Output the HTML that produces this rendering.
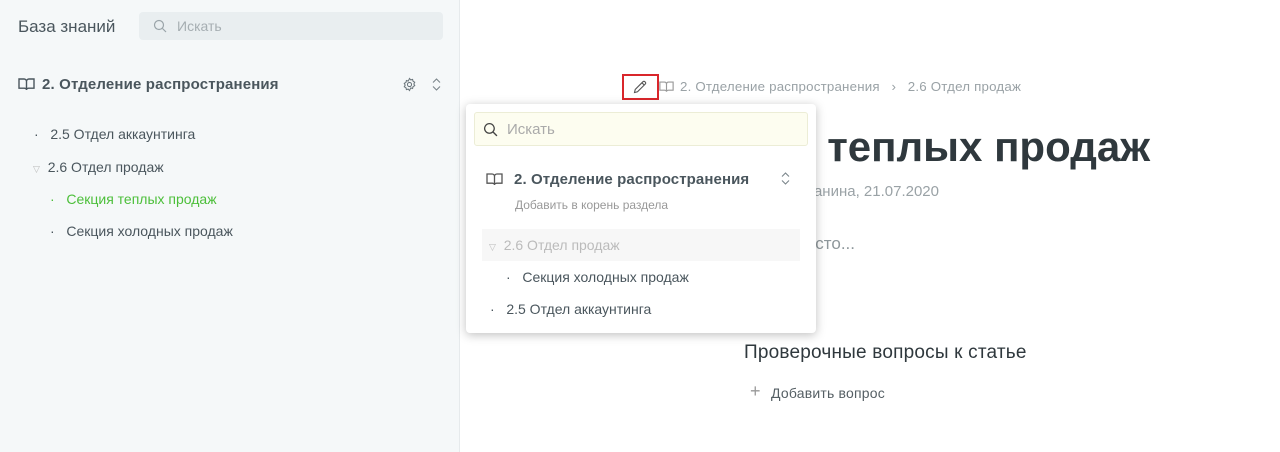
<!DOCTYPE html>
<html><head><meta charset="utf-8"><style>
*{margin:0;padding:0;box-sizing:border-box}
body{width:1280px;height:452px;overflow:hidden;background:#fff;font-family:"Liberation Sans","DejaVu Sans",sans-serif;position:relative;color:#3c4a52}
.a{position:absolute;white-space:nowrap}
#side{position:absolute;left:0;top:0;width:460px;height:452px;background:#f5f8f9;border-right:1px solid #e6eaec}
.r{text-align:right}
</style></head><body>
<div id="side">
 <div class="a" style="left:18px;top:17px;font-size:17px;color:#4a565d">База знаний</div>
 <div class="a" style="left:139px;top:12px;width:304px;height:28px;background:#e9eef0;border-radius:4px"></div>
 <svg class="a" style="left:153px;top:19px" width="14" height="14" viewBox="0 0 14 14"><circle cx="6" cy="6" r="4.5" fill="none" stroke="#9aa4a9" stroke-width="1.2"/><path d="M9.5 9.5L13 13" stroke="#9aa4a9" stroke-width="1.2"/></svg>
 <div class="a" style="left:177px;top:18px;font-size:14px;color:#a6aeb2">Искать</div>
 <svg class="a" style="left:18px;top:77px" width="17" height="14" viewBox="0 0 17 14"><path d="M1 2h5c1.5 0 2.5 1 2.5 2.5V13c0-1-1-1.8-2.3-1.8H1zM16 2h-5c-1.5 0-2.5 1-2.5 2.5V13c0-1 1-1.8 2.3-1.8H16z" fill="none" stroke="#4a565d" stroke-width="1.4"/></svg>
 <div class="a" style="left:42px;top:76px;font-size:15px;font-weight:bold;color:#4a565d;letter-spacing:.15px">2. Отделение распространения</div>
 <svg class="a" style="left:402px;top:77px" width="15" height="15" viewBox="0 0 16 16"><circle cx="8" cy="8" r="2.2" fill="none" stroke="#6b767c" stroke-width="1.1"/><path d="M8 1.5l1.3 1.6 2-.5.5 2 1.8 1-1 1.8 1 1.8-1.8 1-.5 2-2-.5L8 14.5l-1.3-1.6-2 .5-.5-2-1.8-1 1-1.8-1-1.8 1.8-1 .5-2 2 .5z" fill="none" stroke="#6b767c" stroke-width="1.1"/></svg>
 <svg class="a" style="left:431px;top:77px" width="11" height="15" viewBox="0 0 11 15"><path d="M2 5.5L5.5 2 9 5.5M2 9.5L5.5 13 9 9.5" fill="none" stroke="#7a858a" stroke-width="1.1"/></svg>
 <div class="a" style="left:34px;top:126px;font-size:14px;color:#4a565d">·&nbsp;&nbsp;&nbsp;2.5 Отдел аккаунтинга</div>
 <div class="a" style="left:33px;top:159px;font-size:14px;color:#4a565d"><span style="color:#bbb;font-size:9px">▽</span>&nbsp;&nbsp;2.6 Отдел продаж</div>
 <div class="a" style="left:50px;top:191px;font-size:14px;color:#4cbf3a">·&nbsp;&nbsp;&nbsp;Секция теплых продаж</div>
 <div class="a" style="left:50px;top:223px;font-size:14px;color:#4a565d">·&nbsp;&nbsp;&nbsp;Секция холодных продаж</div>
</div>

<div class="a" style="left:622px;top:74px;width:37px;height:26px;border:2px solid #d9262b"></div>
<svg class="a" style="left:632px;top:79px" width="16" height="16" viewBox="0 0 16 16"><path d="M2.5 13.5l.7-3L11 2.7a1.3 1.3 0 0 1 1.9 0l.4.4a1.3 1.3 0 0 1 0 1.9L5.5 12.8z M10 3.8l2.2 2.2" fill="none" stroke="#555" stroke-width="1.1"/></svg>
<svg class="a" style="left:659px;top:80px" width="15" height="13" viewBox="0 0 17 14"><path d="M1 2h5c1.5 0 2.5 1 2.5 2.5V13c0-1-1-1.8-2.3-1.8H1zM16 2h-5c-1.5 0-2.5 1-2.5 2.5V13c0-1 1-1.8 2.3-1.8H16z" fill="none" stroke="#999" stroke-width="1.3"/></svg>
<div class="a" style="left:680px;top:79px;font-size:13.3px;color:#9aa2a6;letter-spacing:.2px">2. Отделение распространения&nbsp;&nbsp;&nbsp;›&nbsp;&nbsp;&nbsp;2.6 Отдел продаж</div>

<div class="a r" style="right:130px;top:123px;font-size:42px;font-weight:bold;color:#2f383d">Секция теплых продаж</div>
<div class="a r" style="right:341px;top:183px;font-size:15px;color:#9aa2a6">Иван Потанина, 21.07.2020</div>
<div class="a r" style="right:425px;top:234px;font-size:17px;color:#8e979b">Пусто...</div>
<div class="a" style="left:744px;top:342px;font-size:19px;color:#2f383d;letter-spacing:.2px">Проверочные вопросы к статье</div>
<div class="a" style="left:750px;top:381px;font-size:18px;color:#999">+</div>
<div class="a" style="left:771px;top:385px;font-size:14px;color:#555f64;letter-spacing:.2px">Добавить вопрос</div>

<div class="a" style="left:466px;top:104px;width:350px;height:229px;background:#fff;border-radius:4px;box-shadow:0 2px 10px rgba(0,0,0,.25)">
 <div class="a" style="left:8px;top:8px;width:334px;height:34px;background:#fdfdf0;border:1px solid #ecedd6;border-radius:3px"></div>
 <svg class="a" style="left:17px;top:18px" width="15" height="15" viewBox="0 0 14 14"><circle cx="6" cy="6" r="4.5" fill="none" stroke="#444" stroke-width="1.2"/><path d="M9.5 9.5L13 13" stroke="#444" stroke-width="1.3"/></svg>
 <div class="a" style="left:41px;top:17px;font-size:15px;color:#aaa">Искать</div>
 <svg class="a" style="left:20px;top:68px" width="17" height="14" viewBox="0 0 17 14"><path d="M1 2h5c1.5 0 2.5 1 2.5 2.5V13c0-1-1-1.8-2.3-1.8H1zM16 2h-5c-1.5 0-2.5 1-2.5 2.5V13c0-1 1-1.8 2.3-1.8H16z" fill="none" stroke="#555" stroke-width="1.3"/></svg>
 <div class="a" style="left:48px;top:67px;font-size:15px;font-weight:bold;color:#4a565d;letter-spacing:.1px">2. Отделение распространения</div>
 <svg class="a" style="left:314px;top:67px" width="11" height="15" viewBox="0 0 11 15"><path d="M2 5.5L5.5 2 9 5.5M2 9.5L5.5 13 9 9.5" fill="none" stroke="#7a858a" stroke-width="1.1"/></svg>
 <div class="a" style="left:49px;top:94px;font-size:12px;color:#999">Добавить в корень раздела</div>
 <div class="a" style="left:16px;top:125px;width:318px;height:32px;background:#f7f7f7"></div>
 <div class="a" style="left:23px;top:133px;font-size:14px;color:#bbb"><span style="font-size:9px">▽</span>&nbsp;&nbsp;2.6 Отдел продаж</div>
 <div class="a" style="left:40px;top:165px;font-size:14px;color:#4a565d">·&nbsp;&nbsp;&nbsp;Секция холодных продаж</div>
 <div class="a" style="left:24px;top:197px;font-size:14px;color:#4a565d">·&nbsp;&nbsp;&nbsp;2.5 Отдел аккаунтинга</div>
</div>
</body></html>
